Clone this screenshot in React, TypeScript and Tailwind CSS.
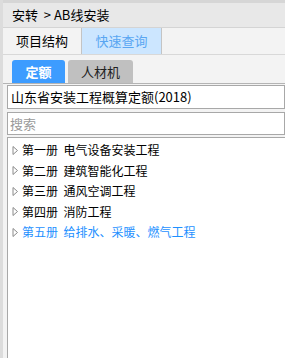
import { useState } from "react";

const BOOKS = [
  "第一册  电气设备安装工程",
  "第二册  建筑智能化工程",
  "第三册  通风空调工程",
  "第四册  消防工程",
  "第五册  给排水、采暖、燃气工程",
];

function Caret() {
  return (
    <svg width="7" height="11" viewBox="0 0 7 11" className="shrink-0">
      <path d="M1 1.5 L5.5 5.5 L1 9.5 Z" fill="none" stroke="#8a8a8a" strokeWidth="1" />
    </svg>
  );
}

export default function App() {
  const [selected, setSelected] = useState(4);
  const font = { fontFamily: '"Noto Sans CJK SC", "Liberation Sans", sans-serif' };

  return (
    <div className="w-[285px] h-[358px] bg-white flex overflow-hidden text-[12px] text-black" style={font}>
      <div className="w-[3px] bg-[#dcdcdc] shrink-0" />
      <div className="flex-1 flex flex-col min-w-0">
        {/* breadcrumb */}
        <div className="h-[3px] bg-[#d6d6d6]" />
        <div className="h-[25px] bg-[#e8e8e8] border-b border-[#d4d4d4] flex items-center pl-[9px] text-[13px]">
          安转 &nbsp;&gt; AB线安装
        </div>
        {/* top tabs */}
        <div className="h-[27px] bg-[#f3f3f3] border-b border-[#d8d8d8] flex">
          <div className="w-[79px] flex items-center justify-center border-r border-[#c4c4c4] text-[13px]">
            项目结构
          </div>
          <div className="w-[80px] flex items-center justify-center border-r border-[#c4c4c4] bg-[#cce6ff] text-[#5aa6f2] text-[13px]">
            快速查询
          </div>
        </div>
        {/* sub tabs */}
        <div className="bg-[#f3f3f3] pt-[5px] pl-[9px] flex gap-[3px] items-end border-b border-[#b4b4b4]">
          <div className="w-[53px] h-[23px] rounded-t-[3px] bg-[#3d9cff] text-white font-bold text-[13px] flex items-center justify-center">
            定额
          </div>
          <div className="w-[65px] h-[23px] rounded-t-[3px] bg-[#c0c0c0] text-[#222] text-[13px] flex items-center justify-center">
            人材机
          </div>
        </div>
        <div className="flex-1 flex flex-col bg-[#f3f3f3] pl-[4px]">
          <div className="mt-[1px] h-[24px] bg-white border border-[#a8a8a8] flex items-center pl-[3px] text-[13px]">
            山东省安装工程概算定额(2018)
          </div>
          <div className="mt-[3px] h-[23px] bg-white border border-[#a8a8a8] flex items-center pl-[2px] text-[13px] text-[#9a9a9a]">
            搜索
          </div>
          <div className="mt-[2px] flex-1 bg-white border border-[#a8a8a8] border-r-0 border-b-0 pt-[2px] pl-[4px]">
            {BOOKS.map((b, i) => (
              <div
                key={b}
                onClick={() => setSelected(i)}
                className={
                  "h-[20.5px] flex items-center gap-[3px] whitespace-pre cursor-default " +
                  (i === selected ? "text-[#1e90ff]" : "text-black")
                }
              >
                <Caret />
                <span>{b}</span>
              </div>
            ))}
          </div>
        </div>
      </div>
    </div>
  );
}
